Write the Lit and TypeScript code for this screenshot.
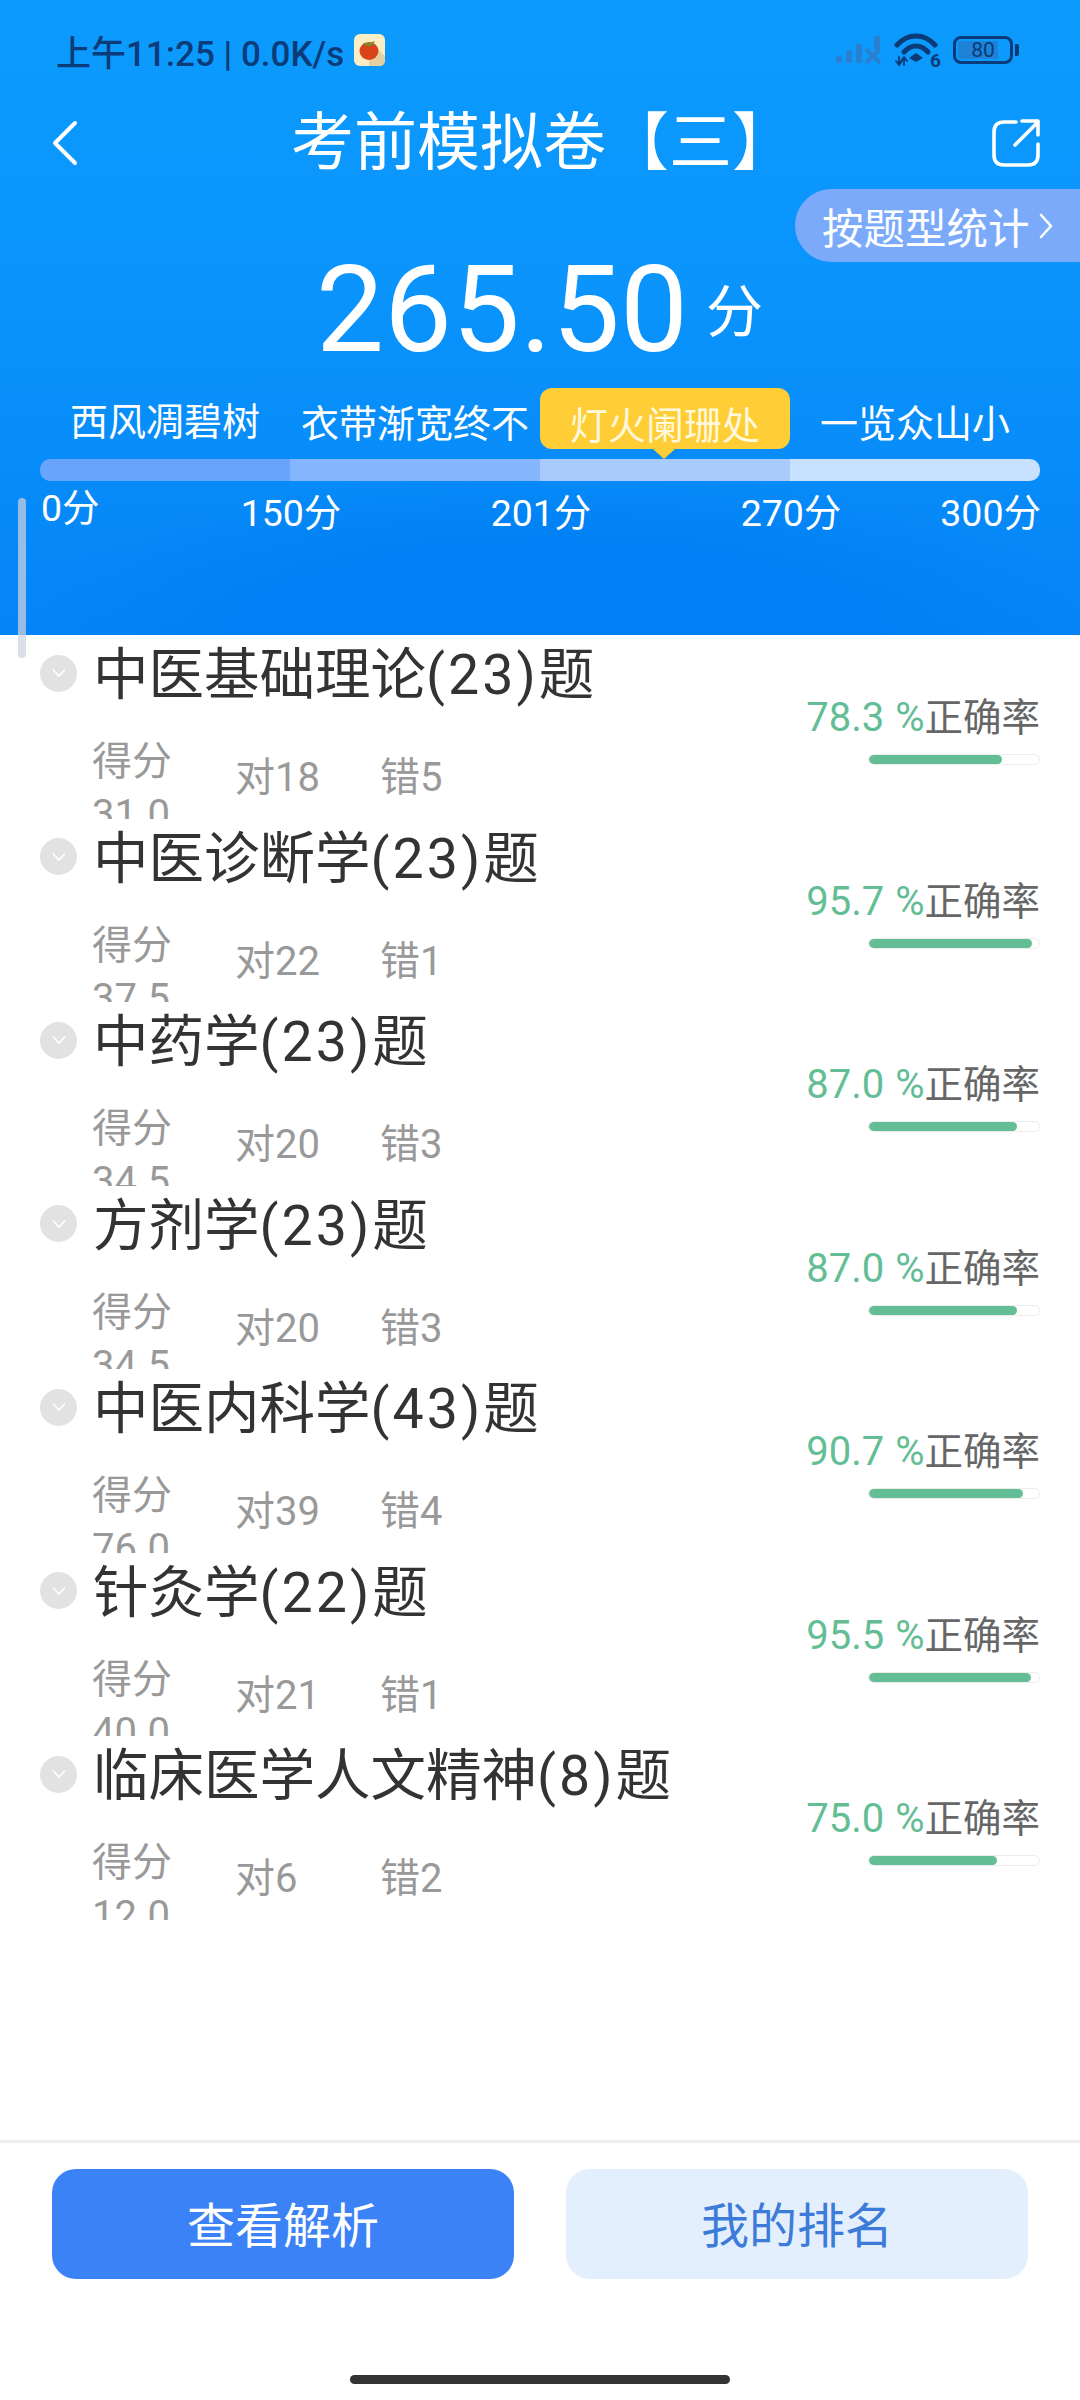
import { LitElement, html, css } from "lit";
import { customElement } from "lit/decorators.js";

const LEVELS = ["西风凋碧树", "衣带渐宽终不", "灯火阑珊处", "一览众山小"];
const ACTIVE_LEVEL = 2;
const TICKS = ["0分", "150分", "201分", "270分", "300分"];

const SECTIONS = [
  { name: "中医基础理论", count: 23, score: "31.0", right: 18, wrong: 5, rate: 78.3 },
  { name: "中医诊断学", count: 23, score: "37.5", right: 22, wrong: 1, rate: 95.7 },
  { name: "中药学", count: 23, score: "34.5", right: 20, wrong: 3, rate: 87.0 },
  { name: "方剂学", count: 23, score: "34.5", right: 20, wrong: 3, rate: 87.0 },
  { name: "中医内科学", count: 43, score: "76.0", right: 39, wrong: 4, rate: 90.7 },
  { name: "针灸学", count: 22, score: "40.0", right: 21, wrong: 1, rate: 95.5 },
  { name: "临床医学人文精神", count: 8, score: "12.0", right: 6, wrong: 2, rate: 75.0 },
];

@customElement("app-root")
export class AppRoot extends LitElement {
  static styles = css`
    :host {
      display: block;
      width: 1080px;
      height: 2400px;
      font-family: Roboto, "Noto Sans CJK SC", sans-serif;
      background: #fff;
    }

    .page {
      position: relative;
      display: flex;
      flex-direction: column;
      height: 2400px;
      overflow: hidden;
    }

    .scrollbar {
      position: absolute;
      left: 18px;
      top: 498px;
      width: 8px;
      height: 160px;
      border-radius: 4px;
      background: rgba(205, 210, 222, 0.72);
    }

    /* header */
    .header {
      height: 635px;
      flex: none;
      color: #fff;
      background:
        radial-gradient(560px 170px at 560px 640px, #0080f4 55%, rgba(0, 128, 244, 0) 100%),
        linear-gradient(180deg, #0c9bfd 0%, #0a94fc 45%, #0584f6 100%);
    }

    .status {
      display: flex;
      align-items: center;
      height: 100px;
      padding: 0 61px 0 56px;
      color: #0b3b78;
      font-size: 35px;
      font-weight: 500;
    }

    .status .tomato {
      margin-left: 10px;
    }

    .status .tray {
      display: flex;
      align-items: center;
      gap: 12px;
      margin-left: auto;
    }

    .battery {
      display: flex;
      align-items: center;
      margin-left: -1px;
    }

    .battery .shell {
      display: flex;
      align-items: center;
      justify-content: center;
      box-sizing: border-box;
      width: 60px;
      height: 28px;
      padding: 2px;
      border: 3px solid #0b3b78;
      border-radius: 8px;
      background: linear-gradient(90deg, #1e83d8 80%, transparent 80%) content-box;
      font-size: 21px;
      font-weight: 400;
      line-height: 1;
    }

    .battery .nub {
      width: 4px;
      height: 12px;
      margin-left: 2px;
      border-radius: 0 2px 2px 0;
      background: #0b3b78;
    }

    .nav {
      display: flex;
      align-items: center;
      justify-content: space-between;
      height: 86px;
      padding: 0 40px 0 52px;
    }

    .nav h1 {
      margin: 0 0 0 16px;
      font-size: 63px;
      font-weight: 400;
      line-height: 86px;
    }

    .pill-row {
      display: flex;
      justify-content: flex-end;
      margin-top: 3px;
    }

    .pill {
      display: flex;
      align-items: center;
      gap: 9px;
      box-sizing: border-box;
      width: 285px;
      height: 73px;
      padding-left: 27px;
      border-radius: 37px 0 0 37px;
      background: #7caafb;
      font-size: 41.5px;
    }

    .score {
      display: flex;
      align-items: center;
      height: 96px;
      padding-left: 316px;
      line-height: 96px;
    }

    .score b {
      font-size: 121px;
      font-weight: 400;
    }

    .score span {
      margin-left: 18px;
      padding-top: 6px;
      font-size: 57px;
    }

    .levels {
      display: grid;
      grid-template-columns: repeat(4, 250px);
      grid-template-rows: 61px;
      margin: 30px 40px 0;
      font-size: 38px;
    }

    .level {
      position: relative;
      display: flex;
      align-items: center;
      justify-content: center;
      padding-top: 4px;
      box-sizing: border-box;
      white-space: nowrap;
    }

    .level.first {
      padding: 0 0 1px;
    }

    .level.active {
      border-radius: 12px;
      background: #ffcd35;
      color: #fff8dc;
      padding-top: 8px;
    }

    .level.active::after {
      content: "";
      position: absolute;
      left: 113px;
      top: 100%;
      border: 11px solid transparent;
      border-top: 10px solid #ffcd35;
      border-bottom: 0;
    }

    .bar {
      display: grid;
      grid-template-columns: repeat(4, 250px);
      height: 22px;
      margin: 10px 40px 0;
      border-radius: 10px;
      overflow: hidden;
    }

    .bar i:nth-child(1) { background: #68a4fb; }
    .bar i:nth-child(2) { background: #84b5fd; }
    .bar i:nth-child(3) { background: #a9cbfc; }
    .bar i:nth-child(4) { background: #c8e1ff; }

    .ticks {
      display: grid;
      grid-template-columns: 125px repeat(3, 250px) 125px;
      margin: 8px 42px 0 41px;
      font-size: 37.5px;
      line-height: 48px;
      text-align: center;
    }

    .ticks span {
      white-space: nowrap;
    }

    .ticks span:first-child {
      text-align: left;
      margin-top: -5px;
    }

    .ticks span:last-child {
      text-align: right;
    }

    /* section rows */
    .list {
      flex: 1;
    }

    .row {
      display: grid;
      grid-template-columns: 1fr auto;
      box-sizing: border-box;
      height: 183.57px;
      overflow: hidden;
    }

    .row-title {
      display: flex;
      align-items: center;
      gap: 16px;
      height: 76px;
      padding-left: 40px;
      color: #333;
      font-size: 55.5px;
      white-space: nowrap;
    }

    .row-title .text {
      padding-bottom: 6px;
    }

    .row-title .count {
      letter-spacing: 3px;
    }

    .toggle {
      display: flex;
      align-items: center;
      justify-content: center;
      width: 37px;
      height: 37px;
      border-radius: 50%;
      background: #e2e2e2;
    }

    .stats {
      display: grid;
      grid-template-columns: 143px 145px auto;
      height: 84px;
      margin: 24px 0 0 92px;
      overflow: hidden;
      color: #999;
      font-size: 40px;
      line-height: 53px;
    }

    .stat-inline {
      padding-top: 16px;
    }

    .rate {
      padding: 58px 40px 0 0;
    }

    .rate-text {
      display: flex;
      justify-content: flex-end;
      align-items: baseline;
      line-height: 50px;
      color: #666;
      font-size: 38.5px;
    }

    .rate-text b {
      color: #63bd95;
      font-size: 40px;
      font-weight: 400;
      word-spacing: 1px;
    }

    .track {
      box-sizing: border-box;
      width: 172px;
      height: 11px;
      margin: 11px 0 0 auto;
      border: 1px solid #ececec;
      border-radius: 6px;
      overflow: hidden;
    }

    .fill {
      height: 100%;
      border-radius: 6px;
      background: #63bd95;
    }

    /* footer */
    .footer {
      display: flex;
      flex-direction: column;
      flex: none;
      box-sizing: border-box;
      height: 260px;
      padding: 26px 52px 16px;
      border-top: 3px solid #eeeeee;
    }

    .actions {
      display: grid;
      grid-template-columns: 462px 462px;
      gap: 52px;
    }

    .btn {
      height: 110px;
      padding: 0 0 5px;
      border: none;
      border-radius: 24px;
      background: #3b82f6;
      color: #fff;
      font: inherit;
      font-size: 48px;
    }

    .btn.soft {
      background: #e3effd;
      color: #3d7bd9;
    }

    .home {
      width: 380px;
      height: 9px;
      margin: auto auto 0;
      border-radius: 5px;
      background: #333;
    }
  `;

  renderSignal() {
    return html`
      <svg width="46" height="30" viewBox="0 0 46 30" fill="#2a80cf">
        <rect x="0" y="21" width="6" height="7" rx="2" />
        <rect x="10" y="15" width="6" height="13" rx="2" />
        <rect x="20" y="9" width="6" height="19" rx="2" />
        <rect x="38" y="1" width="6" height="14" rx="2" />
        <path d="M30 14 L44 28 M44 14 L30 28" stroke="#2a80cf" stroke-width="4" fill="none" />
      </svg>
    `;
  }

  renderWifi() {
    return html`
      <svg width="48" height="36" viewBox="0 0 48 36" fill="none" stroke="#0b3b78" stroke-linecap="round">
        <path d="M3 13 C14 1 30 1 41 13" stroke-width="5" />
        <path d="M10 20 C17 12 27 12 34 20" stroke-width="5" />
        <path d="M22 21 L29 26 L22 30 L15 26 Z" fill="#0b3b78" stroke="none" />
        <path d="M5 25 V32 M2 29 L5 33 L8 29 M10 33 V26 M7 29 L10 25 L13 29" stroke-width="1.8" />
        <text x="36" y="35" fill="#0b3b78" stroke="none" font-size="19" font-weight="700">6</text>
      </svg>
    `;
  }

  renderTomato() {
    return html`
      <svg class="tomato" width="31" height="32" viewBox="0 0 31 32">
        <rect width="31" height="32" rx="6" fill="#fbeec4" />
        <path d="M15 8 L31 22 V26 Q31 32 25 32 H15 Z" fill="#e3cf9f" />
        <ellipse cx="15" cy="17" rx="9.5" ry="9" fill="#d9431a" />
        <path d="M9 9 L15 9 L21 7 L18 12 L12 12 Z" fill="#7a8a2c" />
      </svg>
    `;
  }

  renderSection(s: (typeof SECTIONS)[number]) {
    return html`
      <div class="row">
        <div>
          <div class="row-title">
            <span class="toggle">
              <svg width="16" height="10" viewBox="0 0 16 10" fill="none" stroke="#fff" stroke-width="1.6">
                <path d="M2 1.5 L8 8 L14 1.5" />
              </svg>
            </span>
            <span class="text">${s.name}<span class="count">(${s.count})</span>题</span>
          </div>
          <div class="stats">
            <div>得分<br />${s.score}</div>
            <div class="stat-inline">对${s.right}</div>
            <div class="stat-inline">错${s.wrong}</div>
          </div>
        </div>
        <div class="rate">
          <div class="rate-text"><b>${s.rate.toFixed(1)} %</b>正确率</div>
          <div class="track"><div class="fill" style="width:${s.rate}%"></div></div>
        </div>
      </div>
    `;
  }

  render() {
    return html`
      <div class="page">
        <div class="header">
          <div class="status">
            <span>上午11:25 | 0.0K/s</span>
            ${this.renderTomato()}
            <div class="tray">
              ${this.renderSignal()}
              ${this.renderWifi()}
              <div class="battery">
                <div class="shell">80</div>
                <div class="nub"></div>
              </div>
            </div>
          </div>

          <div class="nav">
            <svg width="26" height="46" viewBox="0 0 26 46" fill="none" stroke="#fff" stroke-width="4" stroke-linecap="round" stroke-linejoin="round">
              <path d="M23 3 L3 23 L23 43" />
            </svg>
            <h1>考前模拟卷【三】</h1>
            <svg width="48" height="48" viewBox="0 0 48 48" fill="none" stroke="#fff" stroke-width="3.6" stroke-linecap="round" stroke-linejoin="round">
              <path d="M24 3 H12 Q2 3 2 13 V36 Q2 46 12 46 H36 Q46 46 46 36 V25" />
              <path d="M23 26 L46 3 M30 2 H46 V16" />
            </svg>
          </div>

          <div class="pill-row">
            <div class="pill">
              <span>按题型统计</span>
              <svg width="14" height="26" viewBox="0 0 14 26" fill="none" stroke="#fff" stroke-width="2.6" stroke-linecap="round" stroke-linejoin="round">
                <path d="M2 2 L12 13 L2 24" />
              </svg>
            </div>
          </div>

          <div class="score"><b>265.50</b><span>分</span></div>

          <div class="levels">
            ${LEVELS.map(
              (name, i) =>
                html`<div class="level ${i === ACTIVE_LEVEL ? "active" : ""} ${i === 0 ? "first" : ""}">${name}</div>`
            )}
          </div>
          <div class="bar"><i></i><i></i><i></i><i></i></div>
          <div class="ticks">${TICKS.map((t) => html`<span>${t}</span>`)}</div>
        </div>

        <div class="list">${SECTIONS.map((s) => this.renderSection(s))}</div>

        <div class="footer">
          <div class="actions">
            <button class="btn">查看解析</button>
            <button class="btn soft">我的排名</button>
          </div>
          <div class="home"></div>
        </div>

        <div class="scrollbar"></div>
      </div>
    `;
  }
}
